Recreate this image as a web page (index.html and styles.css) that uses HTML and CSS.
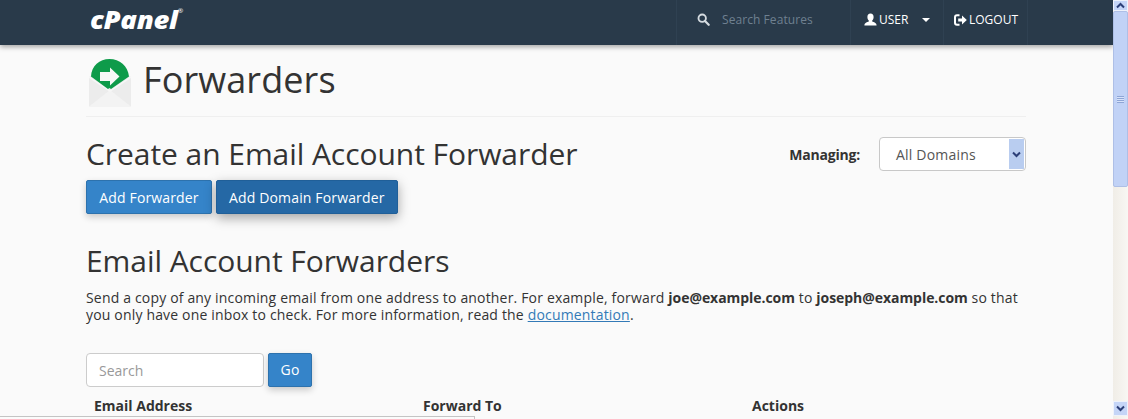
FILE: index.html
```html
<!DOCTYPE html>
<html lang="en">
<head>
<meta charset="utf-8">
<title>Forwarders</title>
<link rel="stylesheet" href="styles.css">
</head>
<body>
<div class="window">
  <div class="page">
    <header class="topbar">
      <div class="logo">cPanel<sup class="reg">®</sup></div>
      <nav class="topnav">
        <div class="nav-cell nav-search">
          <svg class="ico-search" viewBox="0 0 14 14" width="13" height="13"><circle cx="5.6" cy="5.6" r="4" fill="none" stroke="#d5dbe0" stroke-width="2"/><path d="M8.6 8.6L12.6 12.6" stroke="#d5dbe0" stroke-width="2.4" stroke-linecap="round"/></svg>
          <span class="search-ph">Search Features</span>
        </div>
        <div class="nav-cell nav-user">
          <svg class="ico-user" viewBox="0 0 13 13" width="13" height="13"><path d="M6.5 0.5C8.6 0.5 9.6 2 9.6 4C9.6 5.6 8.9 7 8.2 7.6L8.2 8.4C9.8 9 12.6 9.6 12.6 12.5L0.4 12.5C0.4 9.6 3.2 9 4.8 8.4L4.8 7.6C4.1 7 3.4 5.6 3.4 4C3.4 2 4.4 0.5 6.5 0.5Z" fill="#fff"/></svg>
          <span class="nav-text">USER</span>
          <span class="caret"></span>
        </div>
        <div class="nav-cell nav-logout">
          <svg class="ico-logout" viewBox="0 0 13 12" width="13" height="12"><path d="M5.5 1.2H3C1.8 1.2 1 2 1 3.2V8.8C1 10 1.8 10.8 3 10.8H5.5" fill="none" stroke="#fff" stroke-width="2"/><path d="M4.2 4.4H8V1.6L12.8 6L8 10.4V7.6H4.2Z" fill="#fff"/></svg>
          <span class="nav-text">LOGOUT</span>
        </div>
      </nav>
    </header>

    <main class="content">
      <div class="page-head">
        <svg class="page-icon" viewBox="0 0 42 48" width="42" height="48">
          <path d="M0 18L21 6L42 18V47.5H0Z" fill="#ececec"/>
          <path d="M0 47.5L21 31L42 47.5Z" fill="#f3f3f3"/>
          <path d="M0 18L21 32L42 18" fill="none" stroke="#f7f7f7" stroke-width="1.5"/>
          <path d="M2 17.5C2.5 7 10.5 0 20.5 0C30.5 0 39 7 40 17.5L22 30L20.5 29L19 30Z" fill="#0e9b4a"/>
          <path d="M11 13H21V8.5L30.5 17.5L21 26.500V22H11Z" fill="#f6f8f6"/>
        </svg>
        <h1 class="page-title">Forwarders</h1>
      </div>

      <section class="create-row">
        <div class="create-main">
          <h2 class="heading">Create an Email Account Forwarder</h2>
          <div class="btn-row">
            <button class="btn btn-add">Add Forwarder</button>
            <button class="btn btn-active">Add Domain Forwarder</button>
          </div>
        </div>
        <div class="managing">
          <label class="managing-label">Managing:</label>
          <div class="select">
            <span class="select-text">All Domains</span>
            <span class="select-arrow"><svg viewBox="0 0 9 7" width="9" height="7"><path d="M1 1.5L4.5 5L8 1.5" fill="none" stroke="#2c3f78" stroke-width="2"/></svg></span>
          </div>
        </div>
      </section>

      <section class="forwarders">
        <h2 class="heading">Email Account Forwarders</h2>
        <p class="intro">Send a copy of any incoming email from one address to another. For example, forward <b>joe@example.com</b> to <b>joseph@example.com</b> so that you only have one inbox to check. For more information, read the <a href="#">documentation</a>.</p>
        <div class="search-row">
          <input class="search-input" placeholder="Search">
          <button class="btn btn-go">Go</button>
        </div>
        <div class="table-head">
          <div>Email Address</div>
          <div>Forward To</div>
          <div>Actions</div>
        </div>
      </section>
    </main>
    <div class="hscroll"></div>
  </div>
  <aside class="vscroll">
    <div class="sb-btn sb-up"><svg viewBox="0 0 9 7" width="9" height="7"><path d="M1 5.5L4.5 2L8 5.5" fill="none" stroke="#2c3f78" stroke-width="2"/></svg></div>
    <div class="sb-thumb"><span class="grip"></span></div>
    <div class="sb-track"></div>
    <div class="sb-btn sb-down"><svg viewBox="0 0 9 7" width="9" height="7"><path d="M1 1.5L4.5 5L8 1.5" fill="none" stroke="#2c3f78" stroke-width="2"/></svg></div>
  </aside>
</div>
</body>
</html>
```
FILE: styles.css
```css
* { box-sizing: border-box; }
html, body { margin: 0; height: 100%; overflow: hidden; }
body { font-family: "Open Sans", sans-serif; color: #333; background: #fafafa; }
.window { display: flex; width: 1128px; height: 419px; overflow: hidden; }
.page { position: relative; width: 1113px; height: 419px; overflow: hidden; background: #fafafa; }

.topbar {
  display: flex; justify-content: space-between; height: 45px;
  padding: 0 85px 0 90px;
  background: #293a4a;
  box-shadow: 0 2px 5px rgba(0,0,0,.35);
  position: relative;
}
.logo {
  font-family: "Open Sans", sans-serif; font-style: italic; font-weight: 800;
  font-size: 25px; line-height: 38px; height: 38px; letter-spacing: -.3px; color: #fff;
  transform: scaleX(1.1); transform-origin: left center;
}
.reg { font-size: 6px; font-style: normal; font-weight: 400; vertical-align: top; line-height: 22px; }
.topnav { display: flex; height: 45px; }
.nav-cell { display: flex; align-items: center; height: 45px; padding-bottom: 6px; border-left: 1px solid #2f4152; font-size: 12px; color: #fff; }
.nav-search { width: 174px; padding-left: 20px; gap: 12px; }
.search-ph { color: #6f8090; font-size: 12px; letter-spacing: .07px; }
.nav-user { width: 93px; padding-left: 13px; gap: 2px; }
.caret { margin-left: 12px; width: 0; height: 0; border-left: 4px solid transparent; border-right: 4px solid transparent; border-top: 4px solid #fff; }
.nav-logout { width: 85px; padding-left: 10px; gap: 2px; border-right: 1px solid #2f4152; }

.content { width: 940px; margin-left: 86px; }
.page-head { display: flex; align-items: flex-start; height: 72px; padding: 14px 0 0 3px; gap: 12px; border-bottom: 1px solid #efefef; }
.page-icon { flex: none; }
.page-title { margin: -1px 0 0; font-size: 36px; font-weight: 400; line-height: 44px; letter-spacing: .1px; color: #333; }

.create-row { display: flex; justify-content: space-between; margin-top: 19px; }
.heading { margin: 0; font-size: 30px; font-weight: 400; line-height: 36px; letter-spacing: -.06px; color: #333; }
.btn-row { display: flex; gap: 4px; margin-top: 8px; }
.btn {
  height: 34px; padding: 2px 12px 0; border: 1px solid #2d72ad; border-radius: 2px;
  background: #3584c9; color: #fff; font: 400 14px/20px "Open Sans", sans-serif; letter-spacing: .15px;
  box-shadow: 0 3px 7px rgba(0,0,0,.2);
}
.btn-add { width: 126px; padding: 2px 0 0; }
.btn-active { background: #2568a5; border-color: #205f98; box-shadow: 0 4px 12px rgba(0,0,0,.35); }

.managing { display: flex; align-items: flex-start; gap: 19px; margin-top: 1px; }
.managing-label { font-size: 14px; font-weight: 700; line-height: 36px; letter-spacing: -.2px; color: #333; }
.select {
  display: flex; justify-content: space-between; width: 147px; height: 34px; padding: 1px;
  border: 1px solid #c8c8c8; border-radius: 4px; background: #fff;
}
.select-text { padding-left: 15px; font-size: 14px; line-height: 32px; letter-spacing: .2px; color: #555; }
.select-arrow { display: flex; align-items: center; justify-content: center; width: 15px; height: 30px; background: #b9cdf0; }

.forwarders { margin-top: 29px; }
.intro { margin: 10px 0 0; width: 940px; font-size: 14px; line-height: 17px; letter-spacing: .17px; color: #333; }
.intro b { letter-spacing: -.05px; }
.intro a { color: #337ab7; text-decoration: underline; }
.search-row { display: flex; gap: 4px; margin-top: 30px; }
.search-input {
  width: 178px; height: 34px; padding: 0 12px; border: 1px solid #ccc; border-radius: 4px;
  background: #fff; font: 400 14px "Open Sans", sans-serif; color: #555;
}
.search-input::placeholder { color: #999; }
.btn-go { width: 44px; padding: 0; }
.table-head {
  display: grid; grid-template-columns: 329px 329px 1fr; margin-top: 9px; padding-left: 8px;
  font-size: 14px; font-weight: 700; line-height: 20px; color: #333;
}
.hscroll { position: absolute; left: 0; bottom: 0; width: 475px; height: 3px; border-top: 1px solid #c4c4c4; border-right: 1px solid #c4c4c4; background: #fbfbfb; }

.vscroll { display: flex; flex-direction: column; width: 15px; height: 419px; padding-bottom: 3px; background: linear-gradient(to right, #f0ede7, #f8f7f3); }
.sb-btn { display: flex; align-items: center; justify-content: center; width: 15px; height: 12px; background: #c5d5f7; border: 1px solid #eef2fb; flex: none; }
.sb-up { height: 11px; }
.sb-down { height: 15px; }
.sb-thumb { display: flex; align-items: center; justify-content: center; width: 15px; height: 176px; background: #c1d2f6; border: 1px solid #aebfe6; border-radius: 2px; flex: none; }
.grip { width: 7px; height: 7px; background: repeating-linear-gradient(to bottom, #8ea5d6 0 1px, #d8e3fa 1px 2px); }
.sb-track { flex: 1; }
```
